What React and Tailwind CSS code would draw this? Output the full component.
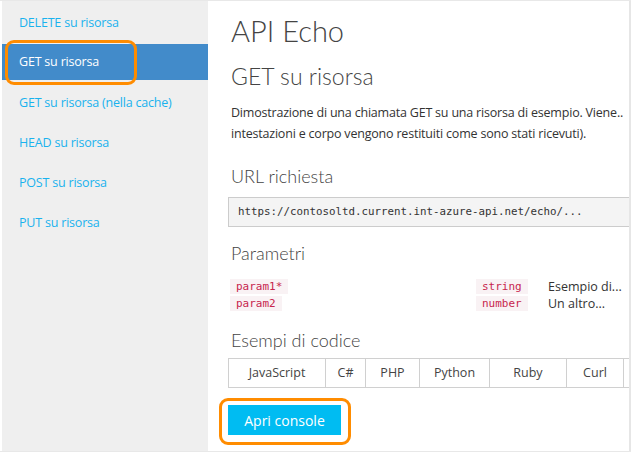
import React from 'react';

const navItems = [
  'DELETE su risorsa',
  'GET su risorsa',
  'GET su risorsa (nella cache)',
  'HEAD su risorsa',
  'POST su risorsa',
  'PUT su risorsa',
];

const tabs = [
  { label: 'JavaScript', w: 'w-[96px]' },
  { label: 'C#', w: 'w-[40px]' },
  { label: 'PHP', w: 'w-[54px]' },
  { label: 'Python', w: 'w-[70px]' },
  { label: 'Ruby', w: 'w-[77px]' },
  { label: 'Curl', w: 'w-[57px]' },
  { label: '', w: 'w-[40px]' },
];

const params = [
  { name: 'param1*', type: 'string', desc: 'Esempio di...' },
  { name: 'param2', type: 'number', desc: 'Un altro...' },
];

const mono = { fontFamily: '"DejaVu Sans Mono", monospace' };
const light = { fontFamily: 'Lato, "Open Sans", sans-serif' };

const Highlight = ({ className }) => (
  <div className={`absolute pointer-events-none rounded-[9px] border-[3px] border-[#ff8c00] ${className}`} />
);

export default function App() {
  const sans = { fontFamily: '"Open Sans", "Noto Sans", sans-serif' };
  return (
    <div className="relative w-[631px] h-[454px] bg-white overflow-hidden" style={sans}>
      <div className="flex h-[452px] border-t border-[#e8e8e8] border-b">
        {/* Sidebar */}
        <div className="w-[208px] shrink-0 bg-[#efefef] border-l-2 border-white pt-[1px]">
          {navItems.map((item, i) =>
            i === 1 ? (
              <div key={item} className="h-[40px] py-[2px]">
                <div className="h-[36px] flex items-center pl-[17px] bg-[#428bca] text-white text-[12.5px] tracking-[-0.2px]">
                  {item}
                </div>
              </div>
            ) : (
              <div
                key={item}
                className="h-[40px] flex items-center pl-[17px] pt-[2px] text-[12.5px] tracking-[-0.2px] text-[#19b2ee]"
              >
                {item}
              </div>
            )
          )}
        </div>

        {/* Main */}
        <div className="flex-1 overflow-hidden border-r-2 border-[#e6e6e6] pl-[20px] pt-[12px] text-[#333]">
          <h1 className="ml-[3px] text-[29px] font-light leading-[36px] text-[#444] whitespace-nowrap" style={light}>
            API Echo
          </h1>
          <h2 className="ml-[3px] mt-[12px] text-[23px] font-light leading-[30px] text-[#444] whitespace-nowrap" style={light}>
            GET su risorsa
          </h2>
          <div className="ml-[3px] mt-[11px] text-[12.5px] leading-[21px] tracking-[-0.2px] whitespace-nowrap text-[#333]">
            <p>Dimostrazione di una chiamata GET su una risorsa di esempio. Viene..</p>
            <p>intestazioni e corpo vengono restituiti come sono stati ricevuti).</p>
          </div>

          <h3 className="ml-[3px] mt-[20px] text-[18px] font-light leading-[24px] text-[#444]" style={light}>
            URL richiesta
          </h3>
          <div
            className="mt-[9px] h-[30px] w-[420px] bg-[#f4f4f4] border border-[#cccccc] flex items-center pl-[9px] text-[10.8px] text-[#333] whitespace-nowrap"
            style={mono}
          >
            https://contosoltd.current.int-azure-api.net/echo/...
          </div>

          <h3 className="ml-[3px] mt-[14px] text-[18px] font-light leading-[24px] text-[#444]" style={light}>
            Parametri
          </h3>
          <div className="mt-[14px] ml-[2px] flex flex-col gap-[1px]">
            {params.map((p) => (
              <div key={p.name} className="flex items-center h-[16px] text-[11px]">
                <div className="w-[246px]">
                  <code className="bg-[#f9f2f4] text-[#c7254e] px-[6px] py-[1px]" style={mono}>
                    {p.name}
                  </code>
                </div>
                <div className="w-[72px]">
                  <code className="bg-[#f9f2f4] text-[#c7254e] px-[6px] py-[1px]" style={mono}>
                    {p.type}
                  </code>
                </div>
                <span className="text-[12.5px] text-[#333] whitespace-nowrap">{p.desc}</span>
              </div>
            ))}
          </div>

          <h3 className="ml-[3px] mt-[16px] text-[18px] font-light leading-[24px] text-[#444]" style={light}>
            Esempi di codice
          </h3>
          <div className="mt-[6px] flex h-[30px] border border-[#d0d0d0] w-[440px]">
            {tabs.map((t, i) => (
              <div
                key={i}
                className={`${t.w} shrink-0 flex items-center justify-center text-[12.5px] text-[#444] ${
                  i > 0 ? 'border-l border-[#d0d0d0]' : ''
                }`}
              >
                {t.label}
              </div>
            ))}
          </div>

          <button className="mt-[17px] h-[30px] w-[113px] bg-[#00bcf2] text-white text-[14px] flex items-center justify-center">
            Apri console
          </button>
        </div>
      </div>

      <Highlight className="left-[5px] top-[40px] w-[132px] h-[45px]" />
      <Highlight className="left-[219px] top-[398px] w-[132px] h-[47px]" />
    </div>
  );
}
